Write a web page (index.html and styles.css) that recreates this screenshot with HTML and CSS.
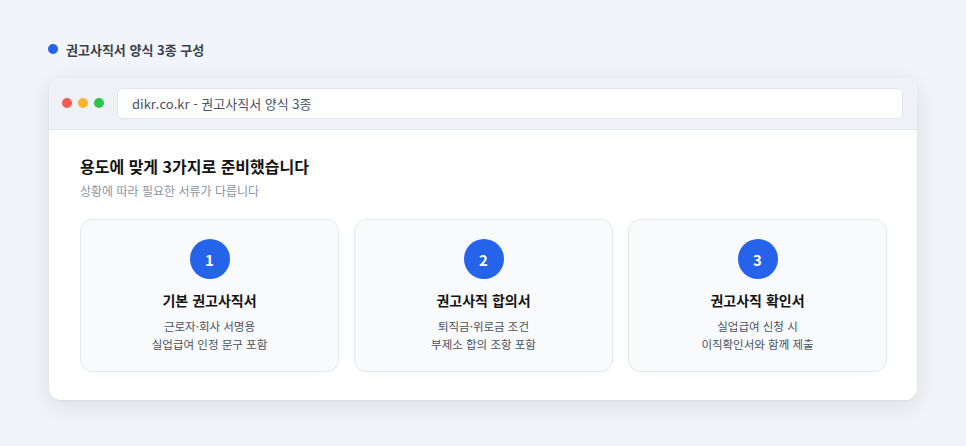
FILE: index.html
```html
<!DOCTYPE html>
<html lang="ko">
<head>
<meta charset="utf-8">
<title>권고사직서 양식 3종 구성</title>
<link rel="stylesheet" href="styles.css">
</head>
<body>
<main class="page">
  <div class="label"><span class="label-dot"></span>권고사직서 양식 3종 구성</div>
  <section class="window">
    <header class="window-bar">
      <div class="lights">
        <span class="light red"></span>
        <span class="light yellow"></span>
        <span class="light green"></span>
      </div>
      <div class="address">dikr.co.kr - 권고사직서 양식 3종</div>
    </header>
    <div class="window-body">
      <h1 class="title">용도에 맞게 3가지로 준비했습니다</h1>
      <p class="subtitle">상황에 따라 필요한 서류가 다릅니다</p>
      <div class="cards">
        <article class="card">
          <div class="num">1</div>
          <h2 class="card-title">기본 권고사직서</h2>
          <p class="card-desc">근로자·회사 서명용<br>실업급여 인정 문구 포함</p>
        </article>
        <article class="card">
          <div class="num">2</div>
          <h2 class="card-title">권고사직 합의서</h2>
          <p class="card-desc">퇴직금·위로금 조건<br>부제소 합의 조항 포함</p>
        </article>
        <article class="card">
          <div class="num">3</div>
          <h2 class="card-title">권고사직 확인서</h2>
          <p class="card-desc">실업급여 신청 시<br>이직확인서와 함께 제출</p>
        </article>
      </div>
    </div>
  </section>
</main>
</body>
</html>
```

FILE: styles.css
```css
* { box-sizing: border-box; }

html {
  background: #f1f4f8;
}

body {
  margin: 0;
  font-family: "Noto Sans CJK KR", "Noto Sans", sans-serif;
  color: #1a1a1a;
}

.page {
  min-height: 446px;
  padding: 36px 49px 0 49px;
}

.label {
  display: flex;
  align-items: center;
  gap: 8px;
  height: 26px;
  font-size: 13px;
  font-weight: 700;
  color: #3a414c;
  margin: 0 0 16px -1px;
}

.label-dot {
  width: 10px;
  height: 10px;
  border-radius: 50%;
  background: #2563eb;
}

.window {
  width: 868px;
  background: #ffffff;
  border-radius: 12px;
  overflow: hidden;
  box-shadow: 0 6px 24px rgba(30, 41, 59, 0.10), 0 1px 3px rgba(30, 41, 59, 0.05);
}

.window-bar {
  display: flex;
  align-items: center;
  gap: 13px;
  height: 52px;
  padding: 0 14px 1px 13px;
  background: #eef1f5;
  border-bottom: 1px solid #e2e6ec;
}

.lights {
  display: flex;
  gap: 6px;
}

.light {
  width: 10px;
  height: 10px;
  border-radius: 50%;
}
.light.red { background: #f25c54; }
.light.yellow { background: #f7b52c; }
.light.green { background: #2fc54a; }

.address {
  flex: 1;
  height: 31px;
  display: flex;
  align-items: center;
  padding: 0 14px;
  background: #ffffff;
  border: 1px solid #e1e5eb;
  border-radius: 6px;
  font-size: 13px;
  color: #4a5260;
}

.window-body {
  padding: 24px 30px 28px 31px;
}

.title {
  margin: 0;
  font-size: 16px;
  line-height: 24px;
  font-weight: 700;
  color: #141414;
}

.subtitle {
  margin: 4px 0 0;
  font-size: 12px;
  line-height: 18px;
  color: #8a94a6;
}

.cards {
  display: grid;
  grid-template-columns: repeat(3, 1fr);
  gap: 15px;
  margin-top: 19px;
}

.card {
  display: flex;
  flex-direction: column;
  align-items: center;
  height: 153px;
  padding: 19px 10px 18px;
  background: #f8fafc;
  border: 1px solid #e2e8f0;
  border-radius: 12px;
  text-align: center;
}

.num {
  width: 40px;
  height: 40px;
  border-radius: 50%;
  background: #2563eb;
  color: #ffffff;
  font-size: 15px;
  font-weight: 700;
  display: flex;
  align-items: center;
  justify-content: center;
}

.card-title {
  margin: 11px 0 0;
  font-size: 14px;
  line-height: 20px;
  font-weight: 700;
  color: #141414;
}

.card-desc {
  margin: 7px 0 0;
  font-size: 11.5px;
  line-height: 18px;
  color: #4a5260;
}
```
